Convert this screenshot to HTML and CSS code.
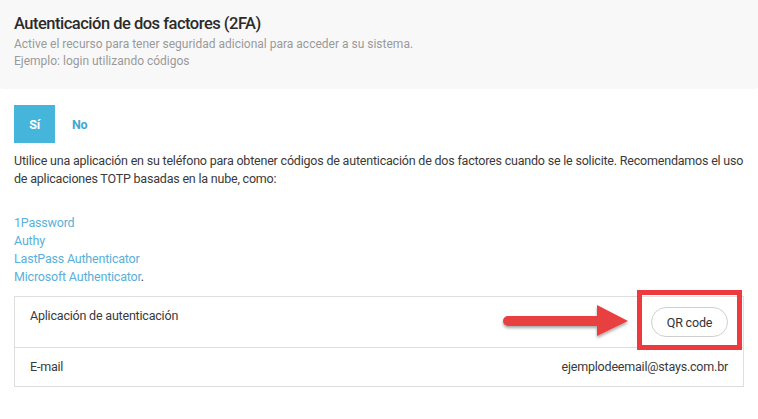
FILE: index.html
```html
<!DOCTYPE html>
<html lang="es">
<head>
<meta charset="utf-8">
<title>2FA</title>
<link rel="stylesheet" href="styles.css">
</head>
<body>
<div class="page">
  <header class="head">
    <h1 class="title">Autenticación de dos factores (2FA)</h1>
    <p class="sub">Active el recurso para tener seguridad adicional para acceder a su sistema.<br>Ejemplo: login utilizando códigos</p>
  </header>
  <main class="content">
    <div class="toggle">
      <button class="opt opt-on">Sí</button>
      <button class="opt">No</button>
    </div>
    <p class="desc">Utilice una aplicación en su teléfono para obtener códigos de autenticación de dos factores cuando se le solicite. Recomendamos el uso de aplicaciones TOTP basadas en la nube, como:</p>
    <div class="links">
      <a class="lnk">1Password</a><br>
      <a class="lnk">Authy</a><br>
      <a class="lnk">LastPass Authenticator</a><br>
      <a class="lnk">Microsoft Authenticator</a>.
    </div>
    <div class="table">
      <div class="row row-app">
        <span class="label">Aplicación de autenticación</span>
        <button class="qr">QR code</button>
      </div>
      <div class="row row-mail">
        <span class="label">E-mail</span>
        <span class="value">ejemplodeemail@stays.com.br</span>
      </div>
    </div>
  </main>
  <svg class="arrow" width="140" height="50" viewBox="0 0 140 50">
    <defs>
      <filter id="sh" x="-20%" y="-40%" width="140%" height="200%">
        <feDropShadow dx="0" dy="2" stdDeviation="1.6" flood-color="#000" flood-opacity="0.35"/>
      </filter>
    </defs>
    <g filter="url(#sh)" fill="#e8403f">
      <rect x="8" y="18" width="100" height="10" rx="5"/>
      <polygon points="102,7 133,23 102,38"/>
    </g>
  </svg>
  <div class="mark"></div>
</div>
</body>
</html>
```
FILE: styles.css
```css
* { box-sizing: border-box; }
html, body { margin: 0; padding: 0; background: #fff; }
body {
  font-family: Roboto, "Liberation Sans", Arial, sans-serif;
  color: #333;
  width: 758px;
  height: 419px;
  overflow: hidden;
}
.page { position: relative; width: 758px; height: 419px; }
.head {
  background: #f8f8f8;
  height: 89px;
  padding: 13px 14px 0;
  border-radius: 0 0 3px 3px;
}
.title {
  margin: 0;
  font-size: 16.5px;
  letter-spacing: -0.5px;
  line-height: 22px;
  font-weight: 500;
  color: #2b2b2b;
}
.sub {
  margin: 1px 0 0;
  font-size: 12px;
  line-height: 17px;
  color: #9a9a9a;
}
.content {
  padding: 16px 14px 0;
  font-size: 12.5px;
  letter-spacing: -0.2px;
}
.toggle { display: flex; gap: 0; }
.opt {
  font-family: inherit;
  height: 38px;
  border: 0;
  background: transparent;
  color: #3fa9d2;
  font-weight: 700;
  font-size: 12.5px;
  letter-spacing: -0.2px;
  padding: 0 14px;
  margin: 0 3px 0 0;
  cursor: pointer;
}
.opt-on { background: #46b5dc; color: #fff; width: 41px; padding: 0; }
.desc {
  margin: 9px 0 0;
  line-height: 18px;
  color: #3a3a3a;
}
.links {
  margin-top: 26px;
  line-height: 18px;
  color: #3a3a3a;
}
.lnk { color: #5ab0d8; text-decoration: none; }
.table {
  margin-top: 10px;
  border: 1px solid #dedede;
}
.row {
  display: flex;
  justify-content: space-between;
  align-items: flex-start;
  padding: 10px 15px;
  line-height: 18px;
  color: #3a3a3a;
}
.row-app { height: 50px; padding-top: 9px; }
.row-app .label { margin-top: 1px; }
.row-mail { border-top: 1px solid #dedede; height: 39px; }
.qr {
  font-family: inherit;
  font-size: 12.5px;
  letter-spacing: -0.2px;
  color: #333;
  background: #fff;
  border: 1px solid #cfcfcf;
  border-radius: 15px;
  height: 30px;
  width: 77px;
  padding: 0;
  margin-top: 1px;
}
.arrow { position: absolute; left: 495px; top: 298px; }
.mark {
  position: absolute;
  left: 637px;
  top: 290px;
  width: 105px;
  height: 60px;
  border: 5px solid #ec3a3e;
}
```
